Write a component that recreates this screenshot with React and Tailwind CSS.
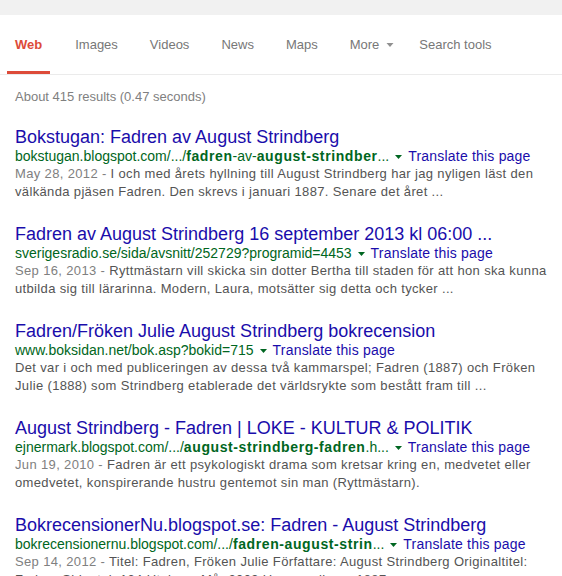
import React from 'react';

const tabs = [
    ['Images', 'h-full flex items-center px-2 text-[#777]'],
    ['Videos', 'h-full flex items-center -ml-[1px] px-2 text-[#777]'],
    ['News', 'h-full flex items-center -ml-[1px] px-2 text-[#777]'],
    ['Maps', 'h-full flex items-center -ml-[1px] px-2 text-[#777]'],
];

const results = [
    {
        title: 'Bokstugan: Fadren av August Strindberg',
        url: [['bokstugan.blogspot.com/.../', false], ['fadren', true], ['-av-', false], ['august-strindber', true], ['...', false]],
        date: 'May 28, 2012',
        lines: ['I och med årets hyllning till August Strindberg har jag nyligen läst den', 'välkända pjäsen Fadren. Den skrevs i januari 1887. Senare det året ...'],
    },
    {
        title: 'Fadren av August Strindberg 16 september 2013 kl 06:00 ...',
        url: [['sverigesradio.se/sida/avsnitt/252729?programid=4453', false]],
        date: 'Sep 16, 2013',
        lines: ['Ryttmästarn vill skicka sin dotter Bertha till staden för att hon ska kunna', 'utbilda sig till lärarinna. Modern, Laura, motsätter sig detta och tycker ...'],
    },
    {
        title: 'Fadren/Fröken Julie August Strindberg bokrecension',
        url: [['www.boksidan.net/bok.asp?bokid=715', false]],
        date: null,
        lines: ['Det var i och med publiceringen av dessa två kammarspel; Fadren (1887) och Fröken', 'Julie (1888) som Strindberg etablerade det världsrykte som bestått fram till ...'],
    },
    {
        title: 'August Strindberg - Fadren | LOKE - KULTUR & POLITIK',
        url: [['ejnermark.blogspot.com/.../', false], ['august-strindberg-fadren', true], ['.h...', false]],
        date: 'Jun 19, 2010',
        lines: ['Fadren är ett psykologiskt drama som kretsar kring en, medvetet eller', 'omedvetet, konspirerande hustru gentemot sin man (Ryttmästarn).'],
    },
    {
        title: 'BokrecensionerNu.blogspot.se: Fadren - August Strindberg',
        url: [['bokrecensionernu.blogspot.com/.../', false], ['fadren-august-strin', true], ['...', false]],
        date: 'Sep 14, 2012',
        lines: ['Titel: Fadren, Fröken Julie Författare: August Strindberg Originaltitel:', 'Fadren Sidantal: 134 Utgiven: Mår 2009 Ursprungligen: 1887'],
    },
];

const Arrow = ({ color, className }) => (
    <svg width="7" height="4" viewBox="0 0 7 4" className={className}>
        <path d="M0 0 L7 0 L3.5 4 Z" fill={color} />
    </svg>
);

const Result = ({ r }) => (
    <div className="mb-[22px]">
        <div className="text-[18px] leading-[22px] text-[#1a0dab] whitespace-nowrap">{r.title}</div>
        <div className="flex items-center text-[14px] leading-[17px] whitespace-nowrap">
            <span className="text-[#006621]">
                {r.url.map(([t, b], i) => (
                    <span key={i} className={b ? 'font-bold tracking-[0.6px]' : ''}>{t}</span>
                ))}
            </span>
            <Arrow color="#006621" className="ml-[6px] mr-[6px]" />
            <span className="text-[#1a0dab] tracking-[0.2px]">Translate this page</span>
        </div>
        <div className="text-[13px] leading-[18px] text-[#545454] whitespace-nowrap tracking-[0.35px]">
            {r.date && <span className="text-[#808080]">{r.date} - </span>}
            {r.lines[0]}
            <br />
            {r.lines[1]}
        </div>
    </div>
);

export default function App() {
    return (
        <div className="w-[562px] h-[576px] overflow-hidden bg-white" style={{ fontFamily: '"Liberation Sans", Arial, sans-serif' }}>
            <div className="h-[15px] bg-[#f1f1f1]" />
            <div className="h-[60px] border-b border-[#ebebeb] flex pl-[7px] gap-[17px] text-[13px]">
                <div className="h-full flex items-center px-2 border-b-[3px] border-[#dd4b39] pt-[3px] font-bold text-[#dd4b39]">Web</div>
                {tabs.map(([t, cls]) => (
                    <div key={t} className={cls}>{t}</div>
                ))}
                <div className="h-full flex items-center -ml-[1px] pl-2 pr-0 text-[#777]">
                    More
                    <Arrow color="#909090" className="ml-[7px] w-[8px]" />
                </div>
                <div className="h-full flex items-center px-2 text-[#777]">Search tools</div>
            </div>
            <div className="pl-[15px] pt-[13px] text-[13px] leading-[18px] text-[#808080]">About 415 results (0.47 seconds)</div>
            <div className="pl-[15px] pt-[20px]">
                {results.map((r, i) => (
                    <Result key={i} r={r} />
                ))}
            </div>
        </div>
    );
}
